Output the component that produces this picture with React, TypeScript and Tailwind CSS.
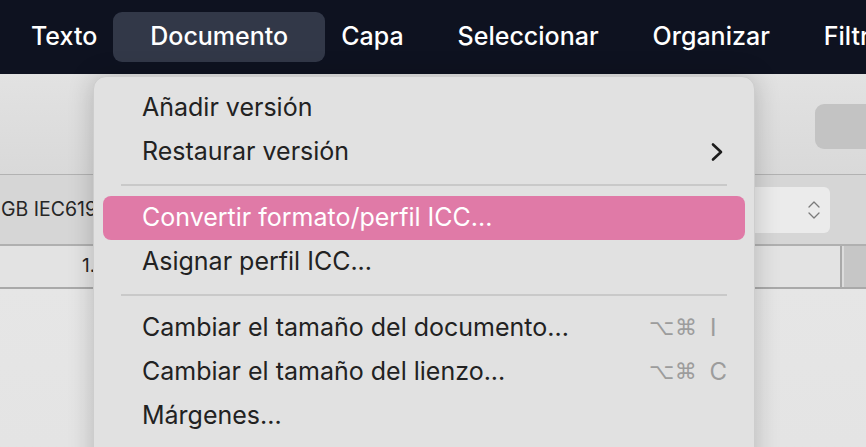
const menuTop = ['Texto', 'Documento', 'Capa', 'Seleccionar', 'Organizar', 'Filtros'];

function MenuBar() {
  return (
    <div className="flex h-[74px] items-center overflow-hidden bg-[#0e1220] pl-[4px] text-[25px] font-medium text-white">
      {menuTop.map((m) =>
        m === 'Documento' ? (
          <div key={m} className="mx-[-11px] flex h-[50px] shrink-0 items-center rounded-[9px] bg-[#323848] px-[37px]">
            {m}
          </div>
        ) : (
          <div key={m} className="shrink-0 px-[27px]">
            {m}
          </div>
        )
      )}
    </div>
  );
}

function Window() {
  return (
    <div className="flex h-[373px] flex-col">
      <div className="flex h-[101px] justify-end border-b border-[#b2b2b2] bg-gradient-to-b from-[#e2e2e2] to-[#d9d9d9] pt-[30px]">
        <div className="mr-[-20px] h-[45px] w-[71px] rounded-[9px] bg-[#c3c3c3]" />
      </div>
      <div className="flex h-[71px] items-center justify-between border-b-2 border-[#b0b0b0] bg-[#d6d6d6]">
        <span className="pl-[1px] text-[19.5px] text-[#262626]">GB IEC61966-2.1</span>
        <div className="mr-[36px] flex h-[46px] w-[130px] items-center justify-end rounded-[6px] bg-[#ebebeb] pr-[9px]">
          <svg width="14" height="22" viewBox="0 0 14 22" fill="none" stroke="#7a7a7a" strokeWidth="1.3" strokeLinecap="round" strokeLinejoin="round">
            <path d="M2 8 L7 3 L12 8" />
            <path d="M2 14 L7 19 L12 14" />
          </svg>
        </div>
      </div>
      <div className="flex h-[43px] border-b-2 border-[#a9a9a9] bg-[#e3e3e3]">
        <div className="flex w-[840px] items-center pl-[82px] text-[19px] text-[#262626]">1.00</div>
        <div className="w-[2px] bg-[#a9a9a9]" />
        <div className="w-[2px] bg-[#dcdcdc]" />
        <div className="flex-1 bg-[#c6c6c6]" />
      </div>
      <div className="flex-1 bg-gradient-to-b from-[#e6e6e6] to-[#e4e4e4]" />
    </div>
  );
}

function Row({
  label,
  active,
  chevron,
  keys,
}: {
  label: string;
  active?: boolean;
  chevron?: boolean;
  keys?: string;
}) {
  return (
    <div
      className={
        active
          ? 'flex h-[44px] items-center rounded-[8px] bg-[#e07aa7] pl-[39px] pr-[18px] text-white'
          : 'flex h-[44px] items-center pl-[39px] pr-[18px] text-[#222222]'
      }
    >
      <span>{label}</span>
      {chevron && (
        <svg className="ml-auto mr-[3px]" width="14" height="20" viewBox="0 0 14 20" fill="none" stroke="#1c1c1c" strokeWidth="2.6" strokeLinecap="round" strokeLinejoin="round">
          <path d="M3 2.5 L11 10 L3 17.5" />
        </svg>
      )}
      {keys && (
        <div className="ml-auto flex w-[78px] items-center text-[24px] text-[#9c9c9c]">
          <span className="w-[26px] font-['DejaVu_Sans',sans-serif] text-[22px] leading-none">⌥</span>
          <span className="w-[35px] font-['DejaVu_Sans',sans-serif] text-[22px] leading-none">⌘</span>
          <span>{keys}</span>
        </div>
      )}
    </div>
  );
}

function Sep() {
  return (
    <div className="mx-[18px] flex h-[22px] items-center">
      <div className="h-[2px] w-full bg-[#c9c9c9]" />
    </div>
  );
}

function DropMenu() {
  return (
    <div className="absolute left-[93px] top-[76px] h-[400px] w-[662px] rounded-t-[13px] border border-[#cdcdcd] bg-[#e1e1e1] px-[9px] pt-[9px] text-[25px] shadow-[0_0_26px_rgba(0,0,0,0.2)]">
      <Row label="Añadir versión" />
      <Row label="Restaurar versión" chevron />
      <Sep />
      <Row label="Convertir formato/perfil ICC..." active />
      <Row label="Asignar perfil ICC..." />
      <Sep />
      <Row label="Cambiar el tamaño del documento..." keys="I" />
      <Row label="Cambiar el tamaño del lienzo..." keys="C" />
      <Row label="Márgenes..." />
    </div>
  );
}

export default function App() {
  return (
    <div className="relative h-[447px] w-[866px] overflow-hidden bg-[#e5e5e5] font-['Inter',sans-serif]">
      <MenuBar />
      <Window />
      <DropMenu />
    </div>
  );
}
